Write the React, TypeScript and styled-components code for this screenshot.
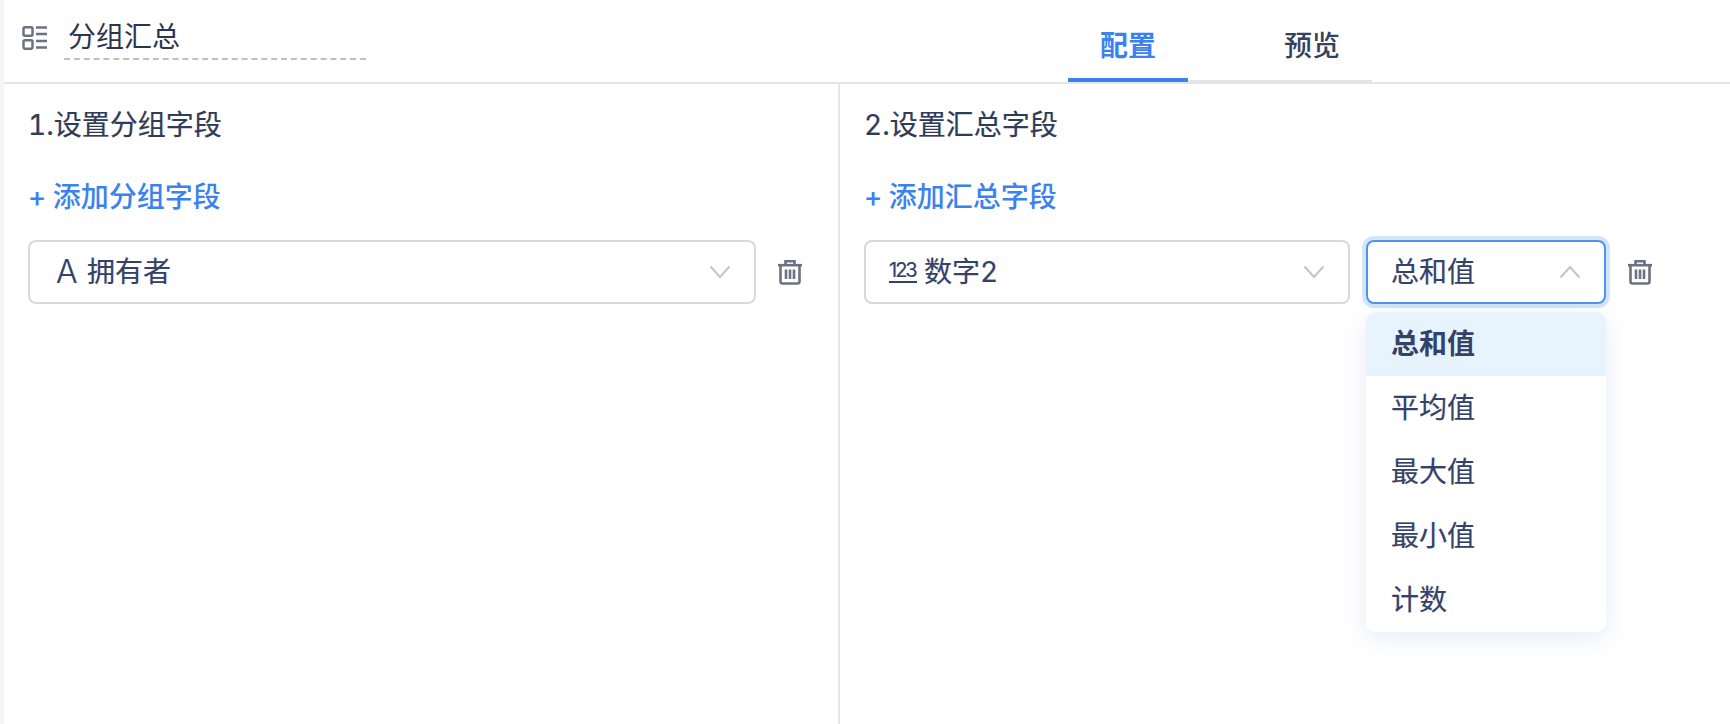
import React from "react";
import styled, { createGlobalStyle } from "styled-components";

const Global = createGlobalStyle`
  html, body { margin: 0; padding: 0; background: #fff; }
  body { font-family: "Inter", "Noto Sans CJK SC", sans-serif; color: #2f3b58; font-variant-numeric: tabular-nums; }
`;

const Page = styled.div`
  width: 1730px;
  height: 724px;
  overflow: hidden;
  box-sizing: border-box;
  background: #fff;
  border-left: 4px solid #f3f5fb;
  display: flex;
  flex-direction: column;
`;

const Header = styled.header`
  height: 84px;
  box-sizing: border-box;
  border-bottom: 2px solid #e3e5e9;
  display: flex;
  padding-left: 18px;
`;

const TitleIcon = styled.svg`
  width: 26px;
  height: 26px;
  margin-top: 24px;
  color: #6b7280;
  flex: none;
`;

const TitleField = styled.div`
  margin-left: 16px;
  width: 302px;
  height: 60px;
  box-sizing: border-box;
  border-bottom: 2px dashed #bdbfc4;
  padding: 19px 0 0 4px;
  font-size: 28px;
  line-height: 36px;
  color: #2b3550;
`;

const Tabs = styled.nav`
  display: flex;
  margin-left: 702px;
  height: 82px;
  width: 304px;
  box-sizing: border-box;
  border-bottom: 2px solid #e3e5e9;
`;

const Tab = styled.div<{ $active?: boolean }>`
  width: ${(p) => (p.$active ? 120 : 184)}px;
  height: 82px;
  box-sizing: border-box;
  flex: none;
  text-align: center;
  font-size: 28px;
  line-height: 36px;
  padding: 28px 0 0 ${(p) => (p.$active ? 0 : 64)}px;
  font-weight: ${(p) => (p.$active ? 600 : 500)};
  color: ${(p) => (p.$active ? "#3b82ee" : "#34415f")};
  border-bottom: 4px solid ${(p) => (p.$active ? "#3b82ee" : "transparent")};
`;

const Body = styled.main`
  flex: 1;
  display: flex;
  min-height: 0;
`;

const Column = styled.section<{ $first?: boolean }>`
  box-sizing: border-box;
  width: ${(p) => (p.$first ? "836px" : "auto")};
  flex: ${(p) => (p.$first ? "none" : "1")};
  border-right: ${(p) => (p.$first ? "2px solid #e3e5e9" : "none")};
  padding: 23px 0 0 24px;
`;

const SectionTitle = styled.h2`
  margin: 0;
  font-size: 28px;
  font-weight: 400;
  line-height: 36px;
  color: #2f3b58;
  -webkit-text-stroke: 0.2px #2f3b58;
`;

const AddLink = styled.div`
  margin-top: 36px;
  font-size: 28px;
  line-height: 36px;
  font-weight: 500;
  word-spacing: -1px;
  color: #3b82ee;
`;

const Row = styled.div`
  margin-top: 25px;
  display: flex;
  align-items: center;
  position: relative;
`;

const Select = styled.div<{ $width: number; $open?: boolean }>`
  width: ${(p) => p.$width}px;
  height: 64px;
  box-sizing: border-box;
  flex: none;
  border-radius: 8px;
  border: 2px solid ${(p) => (p.$open ? "#4d94f0" : "#d9d9d9")};
  box-shadow: ${(p) => (p.$open ? "0 0 0 4px #d3e5fb" : "none")};
  display: flex;
  align-items: center;
  font-size: 28px;
  color: #34426a;
  padding: 0 23px 0 23px;
  background: #fff;
`;

const SelectLabel = styled.span`
  flex: 1;
  line-height: 36px;
  white-space: nowrap;
  display: flex;
  align-items: center;
  gap: 7px;
  -webkit-text-stroke: 0.2px #34426a;
`;

const Chevron = styled.svg`
  width: 22px;
  height: 14px;
  color: #c4c4c4;
  flex: none;
`;

const Trash = styled.svg`
  width: 26px;
  height: 26px;
  color: #6b7280;
  flex: none;
  margin-left: 21px;
`;

const GapSelect = styled.div`
  margin-left: 16px;
  flex: none;
`;

const Menu = styled.ul`
  position: absolute;
  left: 502px;
  top: 72px;
  width: 240px;
  margin: 0;
  padding: 0;
  list-style: none;
  background: #fff;
  border-radius: 10px;
  overflow: hidden;
  box-shadow: 0 6px 24px rgba(70, 90, 180, 0.12);
`;

const MenuItem = styled.li<{ $active?: boolean }>`
  height: 64px;
  box-sizing: border-box;
  padding-left: 25px;
  font-size: 28px;
  line-height: 64px;
  color: #34426a;
  font-weight: ${(p) => (p.$active ? 700 : 400)};
  background: ${(p) => (p.$active ? "#e8f4fd" : "#fff")};
  -webkit-text-stroke: ${(p) => (p.$active ? 0 : 0.2)}px #34426a;
`;

const ChevronDown = () => (
  <Chevron viewBox="0 0 22 14" fill="none" stroke="currentColor" strokeWidth="2">
    <path d="M1.5 1.5 11 12 20.5 1.5" />
  </Chevron>
);

const ChevronUp = () => (
  <Chevron viewBox="0 0 22 14" fill="none" stroke="currentColor" strokeWidth="2">
    <path d="M1.5 12.5 11 2 20.5 12.5" />
  </Chevron>
);

const TrashIcon = () => (
  <Trash viewBox="0 0 26 26" fill="none" stroke="currentColor" strokeWidth="2.6">
    <path d="M1 6.2h24" />
    <path d="M8.5 6V2.2h9V6" />
    <path d="M3.5 7v15.5a2 2 0 0 0 2 2h15a2 2 0 0 0 2-2V7" />
    <path d="M9 10.5v9.5M13 10.5v9.5M17 10.5v9.5" />
  </Trash>
);

const TextTypeIcon = styled.span`
  font-size: 32px;
  width: 20px;
  font-weight: 300;
  font-family: "Inter", sans-serif;
  margin: 0 4px 0 3px;
`;

const NumberTypeIcon = styled.span`
  font-family: "Inter", sans-serif;
  font-size: 20px;
  font-variant-numeric: normal;
  line-height: 22px;
  letter-spacing: -2px;
  border-bottom: 2px solid currentColor;
  width: 28px;
  margin-top: -2px;
`;

export default function App() {
  return (
    <>
      <Global />
      <Page>
        <Header>
          <TitleIcon viewBox="0 0 26 26" fill="none" stroke="currentColor" strokeWidth="2.5">
            <rect x="1.5" y="3.2" width="9" height="8.6" rx="1.5" />
            <rect x="1.5" y="16.2" width="9" height="8.6" rx="1.5" />
            <path d="M14 3.5h11M14 10h11M14 17h11M14 23.5h11" />
          </TitleIcon>
          <TitleField>分组汇总</TitleField>
          <Tabs>
            <Tab $active>配置</Tab>
            <Tab>预览</Tab>
          </Tabs>
        </Header>
        <Body>
          <Column $first>
            <SectionTitle>1.设置分组字段</SectionTitle>
            <AddLink>+ 添加分组字段</AddLink>
            <Row>
              <Select $width={728}>
                <SelectLabel>
                  <TextTypeIcon>A</TextTypeIcon>拥有者
                </SelectLabel>
                <ChevronDown />
              </Select>
              <TrashIcon />
            </Row>
          </Column>
          <Column>
            <SectionTitle>2.设置汇总字段</SectionTitle>
            <AddLink>+ 添加汇总字段</AddLink>
            <Row>
              <Select $width={486}>
                <SelectLabel>
                  <NumberTypeIcon>123</NumberTypeIcon>数字2
                </SelectLabel>
                <ChevronDown />
              </Select>
              <GapSelect>
                <Select $width={240} $open>
                  <SelectLabel>总和值</SelectLabel>
                  <ChevronUp />
                </Select>
              </GapSelect>
              <TrashIcon />
              <Menu>
                <MenuItem $active>总和值</MenuItem>
                <MenuItem>平均值</MenuItem>
                <MenuItem>最大值</MenuItem>
                <MenuItem>最小值</MenuItem>
                <MenuItem>计数</MenuItem>
              </Menu>
            </Row>
          </Column>
        </Body>
      </Page>
    </>
  );
}
